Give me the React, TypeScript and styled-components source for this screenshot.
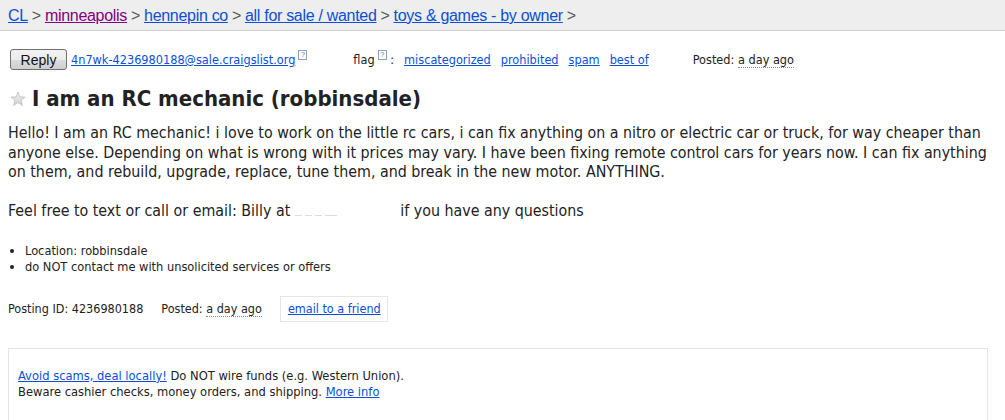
import React from "react";
import styled, { createGlobalStyle } from "styled-components";

const sans = `"DejaVu Sans Condensed", "DejaVu Sans", Tahoma, sans-serif`;
const linkBlue = "#0b4fd8";

const GlobalStyle = createGlobalStyle`
  html, body {
    margin: 0;
    padding: 0;
    background: #fff;
  }
  body {
    font-family: ${sans};
    color: #222;
  }
`;

// ====================== Styled Components ======================
const Page = styled.div`
  width: 100%;
  min-height: 420px;
`;

const Crumbs = styled.div`
  height: 31px;
  box-sizing: border-box;
  background: #eeeeee;
  border-bottom: 1px solid #cfcfcf;
  padding: 6px 8px 0;
  font-family: "Liberation Sans", Arial, sans-serif;
  font-size: 16px;
  letter-spacing: -0.3px;
  line-height: 19px;
  color: #444;
`;

const Link = styled.a<{ $visited?: boolean }>`
  color: ${(p) => (p.$visited ? "#800080" : linkBlue)};
  text-decoration: underline;
  cursor: pointer;
`;

const Sep = styled.span`
  margin: 0 4px;
  color: #555;
`;

const Content = styled.div`
  padding: 0 8px;
`;

const ReplyRow = styled.div`
  display: flex;
  align-items: center;
  height: 21px;
  margin-top: 18px;
  font-size: 12.6px;
  padding-left: 2px;
`;

const ReplyButton = styled.button`
  width: 57px;
  height: 21px;
  box-sizing: border-box;
  border: 1px solid #707070;
  border-radius: 3px;
  background: linear-gradient(#f2f2f2 0%, #ebebeb 50%, #dddddd 51%, #cfcfcf 100%);
  font-family: "Liberation Sans", Arial, sans-serif;
  font-size: 14px;
  color: #111;
  padding: 0;
  margin-right: 4px;
`;

const Help = styled.span`
  display: inline-flex;
  align-items: center;
  justify-content: center;
  width: 7px;
  height: 8px;
  border: 1px solid #8aa0c8;
  font-size: 7px;
  line-height: 8px;
  color: #4a6fb5;
  font-family: "Liberation Sans", Arial, sans-serif;
  position: relative;
  top: -5px;
  margin-left: 3px;
`;

const Flag = styled.span<{ $left: number }>`
  margin-left: ${(p) => p.$left}px;
  display: inline-flex;
  align-items: center;
`;

const FlagLink = styled(Link)`
  margin-left: 10px;
`;

const Abbr = styled.span`
  border-bottom: 1px dotted #888;
`;

const TitleRow = styled.h2`
  display: flex;
  align-items: center;
  gap: 6px;
  margin: 15px 0 0 2px;
  font-family: ${sans};
  font-size: 22px;
  font-weight: bold;
  line-height: 28px;
  color: #222;
`;

const Body = styled.section`
  margin-top: 10px;
  font-size: 15.85px;
  line-height: 19.5px;
  color: #222;
`;

const Hidden = styled.span`
  display: inline-block;
  width: 101px;
  vertical-align: baseline;
  height: 1px;
`;

const Smudge = styled.span<{ $w: number }>`
  display: inline-block;
  width: ${(p) => p.$w}px;
  height: 1px;
  margin-right: 3px;
  background: #d6dee9;
`;

const Attrs = styled.ul`
  margin: 22px 0 0;
  padding-left: 17px;
  font-size: 12.7px;
  line-height: 16px;
`;

const PostingInfo = styled.div`
  display: flex;
  align-items: center;
  margin-top: 21px;
  font-size: 12.5px;
  gap: 18px;
`;

const FriendBox = styled.span`
  display: inline-flex;
  align-items: center;
  height: 26px;
  box-sizing: border-box;
  padding: 0 6px 0 7px;
  border: 1px solid #e6e6e6;
`;

const ScamBox = styled.div`
  margin-top: 26px;
  width: 980px;
  height: 80px;
  box-sizing: border-box;
  border: 1px solid #e4e4e4;
  padding: 19px 9px 0;
  font-size: 12.8px;
  line-height: 16px;
`;

// ====================== Star ======================
const Star = () => (
  <svg width="16" height="16" viewBox="0 0 16 16">
    <defs>
      <linearGradient id="sg" x1="0" y1="0" x2="0" y2="1">
        <stop offset="0" stopColor="#f4f4f4" />
        <stop offset="1" stopColor="#cfcfcf" />
      </linearGradient>
    </defs>
    <path
      d="M8 1 L9.9 6 L15 6.1 L11 9.3 L12.4 14.5 L8 11.5 L3.6 14.5 L5 9.3 L1 6.1 L6.1 6 Z"
      fill="url(#sg)"
      stroke="#bdbdbd"
      strokeWidth="0.8"
      strokeLinejoin="round"
    />
  </svg>
);

// ===============================================================
const App: React.FC = () => {
  return (
    <Page>
      <GlobalStyle />
      <Crumbs>
        <Link>CL</Link>
        <Sep>&gt;</Sep>
        <Link $visited>minneapolis</Link>
        <Sep>&gt;</Sep>
        <Link>hennepin co</Link>
        <Sep>&gt;</Sep>
        <Link>all for sale / wanted</Link>
        <Sep>&gt;</Sep>
        <Link>toys &amp; games - by owner</Link>
        <Sep>&gt;</Sep>
      </Crumbs>

      <Content>
        <ReplyRow>
          <ReplyButton>Reply</ReplyButton>
          <Link>4n7wk-4236980188@sale.craigslist.org</Link>
          <Help>?</Help>
          <Flag $left={46}>
            flag <Help>?</Help>&nbsp;:
          </Flag>
          <FlagLink>miscategorized</FlagLink>
          <FlagLink>prohibited</FlagLink>
          <FlagLink>spam</FlagLink>
          <FlagLink>best of</FlagLink>
          <Flag $left={44}>
            Posted:&nbsp;<Abbr>a day ago</Abbr>
          </Flag>
        </ReplyRow>

        <TitleRow>
          <Star />
          I am an RC mechanic (robbinsdale)
        </TitleRow>

        <Body>
          Hello! I am an RC mechanic! i love to work on the little rc cars, i can
          fix anything on a nitro or electric car or truck, for way cheaper than
          anyone else. Depending on what is wrong with it prices may vary. I have
          been fixing remote control cars for years now. I can fix anything on
          them, and rebuild, upgrade, replace, tune them, and break in the new
          motor. ANYTHING.
          <br />
          <br />
          Feel free to text or call or email: Billy at{" "}
          <Hidden>
            <Smudge $w={7} />
            <Smudge $w={7} />
            <Smudge $w={7} />
            <Smudge $w={12} />
          </Hidden>{" "}
          if you have any questions
        </Body>

        <Attrs>
          <li>Location: robbinsdale</li>
          <li>do NOT contact me with unsolicited services or offers</li>
        </Attrs>

        <PostingInfo>
          <span>Posting ID: 4236980188</span>
          <span>
            Posted: <Abbr>a day ago</Abbr>
          </span>
          <FriendBox>
            <Link>email to a friend</Link>
          </FriendBox>
        </PostingInfo>

        <ScamBox>
          <Link>Avoid scams, deal locally!</Link> Do NOT wire funds (e.g. Western
          Union).
          <br />
          Beware cashier checks, money orders, and shipping.{" "}
          <Link>More info</Link>
        </ScamBox>
      </Content>
    </Page>
  );
};

export default App;
